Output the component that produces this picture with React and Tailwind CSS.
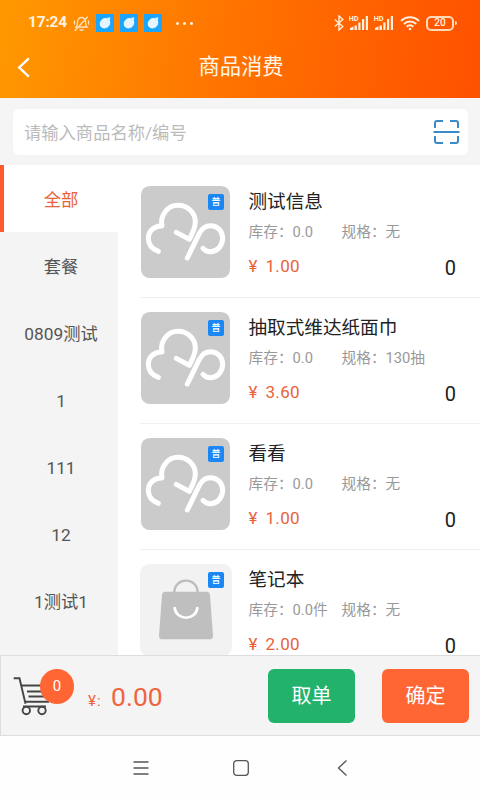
import { useState } from 'react';

const categories = ['全部', '套餐', '0809测试', '1', '111', '12', '1测试1'];

const products = [
  { id: 1, name: '测试信息', stock: '0.0', spec: '无', price: '1.00', count: 0 },
  { id: 2, name: '抽取式维达纸面巾', stock: '0.0', spec: '130抽', price: '3.60', count: 0 },
  { id: 3, name: '看看', stock: '0.0', spec: '无', price: '1.00', count: 0 },
  { id: 4, name: '笔记本', stock: '0.0件', spec: '无', price: '2.00', count: 0, bag: true },
];

function AppBadge() {
  return (
    <svg className="h-[18px] w-[18px]" viewBox="0 0 18 18">
      <rect width="18" height="18" fill="#1ba4fb" />
      <ellipse cx="9" cy="9.200" rx="5.600" ry="4.900" transform="rotate(-40 9 9.200)" fill="#e4f5ff" />
      <path d="M11 3.600l3.200-.2-.2 3.200z" fill="#e4f5ff" />
    </svg>
  );
}

function HdSignal() {
  return (
    <svg className="h-4 w-[20px]" viewBox="0 0 20 16" fill="#fff0dc">
      <text x="-.5" y="6" fontSize="7.500" fontWeight="700" fontFamily="Roboto, sans-serif">HD</text>
      <path d="M1 13l3.500-1.500V15H1zM5.500 10.500h2.400V15H5.500zM9.300 7.500h2.200V15H9.300zM13 4h2.200v11H13zM16.800 1H19v14h-2.200z" />
    </svg>
  );
}

function StatusBar() {
  return (
    <div className="flex h-[46px] items-center pr-[23px] pl-[28px] text-[#fff3e0]">
      <span className="w-[45px] text-[15.500px] leading-none font-bold tracking-[-0.200px]">17:24</span>
      <svg className="h-[17px] w-[17px]" viewBox="0 0 17 17" fill="none" stroke="#ffe3bd" strokeWidth="1.300" strokeLinecap="round">
        <path d="M3 12h11c-1.200-1.200-1.500-2.500-1.500-5 0-2.700-1.600-4.500-4-4.500S4.500 4.300 4.500 7c0 2.500-.3 3.800-1.500 5zM7 14.500c.8 1 2.200 1 3 0M14.500 2L2 15.500M1.500 6v3M15.500 6v3" />
      </svg>
      <div className="ml-[6px] flex gap-[6px]">
        <AppBadge />
        <AppBadge />
        <AppBadge />
      </div>
      <div className="ml-[14px] flex gap-[4px]">
        <i className="h-[3px] w-[3px] rounded-full bg-[#fff3e0]" />
        <i className="h-[3px] w-[3px] rounded-full bg-[#fff3e0]" />
        <i className="h-[3px] w-[3px] rounded-full bg-[#fff3e0]" />
      </div>
      <div className="ml-auto flex items-center">
        <svg className="mr-[5px] h-4 w-[10px]" viewBox="0 0 10 16" fill="none" stroke="#fff0dc" strokeWidth="1.400">
          <path d="M.8 4.500l8 7L5 15V1l3.800 3.500-8 7" />
        </svg>
        <HdSignal />
        <span className="w-[5px]" />
        <HdSignal />
        <svg className="ml-[6px] h-4 w-[20px]" viewBox="0 0 20 16" fill="none" stroke="#fff0dc" strokeWidth="2">
          <path d="M1 6c5-5 13-5 18 0M3.800 9c3.500-3.500 8.900-3.500 12.400 0M6.600 11.800c2-1.900 4.800-1.900 6.800 0" />
          <circle cx="10" cy="14" r="1.300" fill="#fff0dc" stroke="none" />
        </svg>
        <div className="ml-[6px] flex h-[15px] w-[28px] items-center justify-center rounded-[5px] border-2 border-[#ffd9b8] text-[10px] leading-none font-medium">
          20
        </div>
        <i className="ml-px h-[4px] w-[2px] rounded-r bg-[#ffe3c8]" />
      </div>
    </div>
  );
}

function CloudPicture() {
  return (
    <svg className="h-[92px] w-[89px]" viewBox="0 0 267 276">
      <rect width="267" height="276" rx="26" fill="#cbcbcb" />
      <g fill="none" stroke="#fff" strokeWidth="15" strokeLinecap="round" strokeLinejoin="round">
        <path d="M52 196C32 189 22 175 22 157c0-21 17-38 41-37C56 88 80 58 111 58c30 0 52 23 52 50 0 18-8 33-18 52l-39-21" />
        <path d="M139 216L175 142c8-16 18-23 34-23 20 0 36 16 36 38s-16 40-37 40c-9 0-16-3-22-10" />
      </g>
    </svg>
  );
}

function BagPicture() {
  return (
    <svg className="h-[92px] w-[92px] -ml-px" viewBox="0 0 276 276">
      <rect width="276" height="276" rx="28" fill="#f2f2f2" />
      <path d="M103 86c0-48 70-48 70 0" fill="none" stroke="#bdbdbd" strokeWidth="7" />
      <path d="M77 83h122c7 0 10 3 11 10l9 122c0 7-4 11-10 11H68c-7 0-11-4-11-11l9-122c1-7 4-10 11-10z" fill="#bfbfbf" />
      <path d="M104 132c5 39 63 39 68 0" fill="none" stroke="#fff" strokeWidth="8" strokeLinecap="round" />
    </svg>
  );
}

function ProductRow({ product }) {
  return (
    <div className="ml-[22px] flex h-[126px] shrink-0 border-b border-[#f0f0f0] pt-[14px] pl-px">
      <div className="relative h-[92px] w-[89px] shrink-0">
        {product.bag ? <BagPicture /> : <CloudPicture />}
        <span className="absolute top-[8px] left-[67px] flex h-[16px] w-[16px] items-center justify-center rounded-[2px] bg-[#1b87f5] text-[9px] leading-none font-medium text-white">
          普
        </span>
      </div>
      <div className="ml-[18.500px] flex-1 pr-[24px]">
        <h2 className="mt-[2px] h-[28px] text-[18.600px] leading-[28px] text-[#222222]">{product.name}</h2>
        <div className="mt-[5px] flex h-[22px] text-[14.700px] leading-[22px] text-[#999999]">
          <span className="w-[93px]">库存：{product.stock}</span>
          <span>规格：{product.spec}</span>
        </div>
        <div className="mt-[11px] flex h-[24px] items-center text-[17px] leading-[24px] text-[#e8623a]">
          <span className="w-[17px]">¥</span>
          <span className="tracking-[0.300px]">{product.price}</span>
          <span className="mt-[3px] ml-auto text-[20px] leading-[20px] text-[#222222]">{product.count}</span>
        </div>
      </div>
    </div>
  );
}

function App() {
  const [active, setActive] = useState(0);

  return (
    <div className="flex h-[800px] w-[480px] flex-col overflow-hidden bg-white font-['Roboto','Noto_Sans_CJK_SC',sans-serif]">
      <header className="h-[98px] shrink-0 bg-[linear-gradient(100deg,#ff9900_0%,#ff7300_48%,#ff5000_100%)]">
        <StatusBar />
        <div className="flex h-[42px] items-center px-[17px]">
          <svg className="h-[21px] w-[14px]" viewBox="0 0 14 22" fill="none" stroke="#fff" strokeWidth="2.500">
            <path d="M12 1.500L2 11l10 9.500" />
          </svg>
          <h1 className="flex-1 pr-[12px] text-center text-[21.300px] leading-[40px] text-[#fff6e8]">商品消费</h1>
        </div>
      </header>

      <div className="h-[67px] shrink-0 bg-[#f5f5f6] pt-[11px] pr-[12px] pl-[13px]">
        <div className="flex h-[46px] items-center justify-between rounded-[6px] bg-white pr-[8px] pl-[11px]">
          <span className="pt-[3px] text-[17.300px] text-[#bbbbbb]">请输入商品名称/编号</span>
          <svg className="h-[26px] w-[27px]" viewBox="0 0 27 26" fill="none" stroke="#3c8bc9" strokeWidth="2">
            <path d="M2 9V4q0-2 2-2h6M17 2h6q2 0 2 2v5M25 17v5q0 2-2 2h-6M10 24H4q-2 0-2-2v-5M.5 13h26" />
          </svg>
        </div>
      </div>

      <main className="flex h-[490px] shrink-0 overflow-hidden">
        <aside className="w-[118px] shrink-0 bg-[#f4f4f4]">
          {categories.map((name, i) => (
            <div
              key={name}
              onClick={() => setActive(i)}
              className={
                i === active
                  ? 'flex h-[67px] items-center justify-center border-l-4 border-[#ff5a2c] bg-white pt-[4px] text-[17.300px] text-[#e8623a]'
                  : 'flex h-[67px] items-center justify-center border-l-4 border-transparent pt-[4px] text-[17.300px] text-[#555555]'
              }
            >
              {name}
            </div>
          ))}
        </aside>
        <section className="flex flex-1 flex-col overflow-hidden pt-[7px]">
          {products.map((product) => (
            <ProductRow key={product.id} product={product} />
          ))}
        </section>
      </main>

      <footer className="flex h-[81px] shrink-0 items-center border-y border-l border-[#dddddd] bg-[#f4f4f4] pr-[11px] pl-[12px]">
        <div className="relative h-[54px] w-[62px]">
          <svg className="mt-[8px] h-[40px] w-[38px]" viewBox="0 0 38 40" fill="none" stroke="#444444" strokeWidth="1.900">
            <path d="M.7 1.200h5.800l6 25.500M8 8.500h27M14 14.500h20M15.500 19.500h18M12 24.800h24M10 29.500h23" />
            <circle cx="13.300" cy="33.500" r="3.700" fill="#f4f4f4" />
            <circle cx="29" cy="33.500" r="3.700" fill="#f4f4f4" />
          </svg>
          <span className="absolute top-0 left-[27px] flex h-[35px] w-[34px] items-center justify-center rounded-full bg-[#ff6633] pt-px text-[15px] text-white">
            0
          </span>
        </div>
        <div className="mt-[2px] ml-[13px] flex items-baseline text-[#ee6440]">
          <span className="w-[23px] text-[15px] tracking-[1px]">¥:</span>
          <span className="text-[26.500px]">0.00</span>
        </div>
        <button className="ml-auto h-[54px] w-[87px] rounded-[6px] bg-[#22b26b] pt-px text-[20px] text-white">取单</button>
        <button className="ml-[27px] h-[54px] w-[87px] rounded-[6px] bg-[#ff6633] pt-px text-[20px] text-white">确定</button>
      </footer>

      <nav className="flex h-[64px] shrink-0 items-center bg-[#fefefe] pl-[133px]">
        <svg className="h-[16px] w-[16px]" viewBox="0 0 16 16" stroke="#555555" strokeWidth="1.400">
          <path d="M.5 2h15M.5 8h15M.5 14h15" />
        </svg>
        <svg className="ml-[84px] h-[16px] w-[16px]" viewBox="0 0 16 16" fill="none" stroke="#555555" strokeWidth="1.300">
          <rect x=".7" y=".7" width="14.600" height="14.600" rx="3" />
        </svg>
        <svg className="ml-[88px] h-[16px] w-[10px]" viewBox="0 0 10 16" fill="none" stroke="#555555" strokeWidth="1.300">
          <path d="M9.500.5L1.500 8l8 7.500" />
        </svg>
      </nav>
    </div>
  );
}

export default App;
